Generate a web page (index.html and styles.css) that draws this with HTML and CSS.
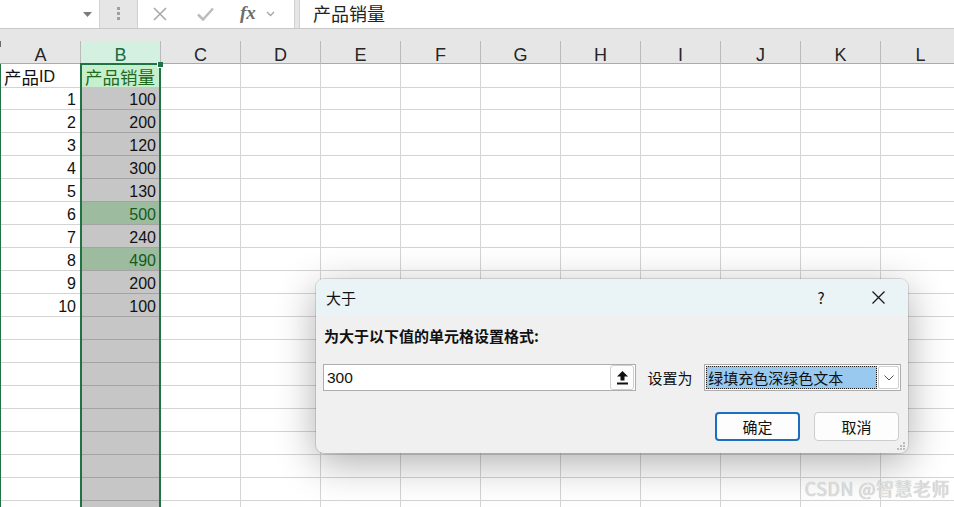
FILE: index.html
```html
<!DOCTYPE html>
<html lang="zh-CN">
<head>
<meta charset="utf-8">
<title>大于</title>
<link rel="stylesheet" href="styles.css">
</head>
<body>
<div class="app">
  <div class="fbar">
    <div class="namebox">
      <svg class="caret" width="9" height="5" viewBox="0 0 9 5"><path d="M0 0H9L4.5 5Z" fill="#7a7a7a"/></svg>
    </div>
    <div class="dots"><i></i><i></i><i></i></div>
    <div class="fxtools">
      <svg class="ico-x" width="16" height="14" viewBox="0 0 16 14"><path d="M2 1L14 13M14 1L2 13" stroke="#a9a9a9" stroke-width="1.6" fill="none"/></svg>
      <svg class="ico-ok" width="17" height="14" viewBox="0 0 17 14"><path d="M1 7.5L6 12.5L16 1.5" stroke="#bdbdbd" stroke-width="2.6" fill="none"/></svg>
      <span class="fx">fx</span>
      <svg class="ico-dd" width="9" height="6" viewBox="0 0 9 6"><path d="M1 1L4.5 4.5L8 1" stroke="#a3a3a3" stroke-width="1.3" fill="none"/></svg>
    </div>
    <div class="formula">产品销量</div>
  </div>
  <div class="band"></div>
  <div class="sheet">
    <div class="hdr">
      <div class="corner"></div>
      <div class="h">A</div><div class="h hsel">B</div><div class="h">C</div><div class="h">D</div><div class="h">E</div><div class="h">F</div><div class="h">G</div><div class="h">H</div><div class="h">I</div><div class="h">J</div><div class="h">K</div><div class="h">L</div>
    </div>
    <div class="rows">
      <div class="row"><div class="edge"></div><div class="c a left"><span class="cjk">产品</span>ID</div><div class="c b active"><span class="cjk">产品销量</span></div><div class="rest"></div></div>
      <div class="row"><div class="edge"></div><div class="c a">1</div><div class="c b">100</div><div class="rest"></div></div>
      <div class="row"><div class="edge"></div><div class="c a">2</div><div class="c b">200</div><div class="rest"></div></div>
      <div class="row"><div class="edge"></div><div class="c a">3</div><div class="c b">120</div><div class="rest"></div></div>
      <div class="row"><div class="edge"></div><div class="c a">4</div><div class="c b">300</div><div class="rest"></div></div>
      <div class="row"><div class="edge"></div><div class="c a">5</div><div class="c b">130</div><div class="rest"></div></div>
      <div class="row"><div class="edge"></div><div class="c a">6</div><div class="c b hit">500</div><div class="rest"></div></div>
      <div class="row"><div class="edge"></div><div class="c a">7</div><div class="c b">240</div><div class="rest"></div></div>
      <div class="row"><div class="edge"></div><div class="c a">8</div><div class="c b hit">490</div><div class="rest"></div></div>
      <div class="row"><div class="edge"></div><div class="c a">9</div><div class="c b">200</div><div class="rest"></div></div>
      <div class="row"><div class="edge"></div><div class="c a">10</div><div class="c b">100</div><div class="rest"></div></div>
      <div class="row"><div class="edge"></div><div class="c a"></div><div class="c b"></div><div class="rest"></div></div>
      <div class="row"><div class="edge"></div><div class="c a"></div><div class="c b"></div><div class="rest"></div></div>
      <div class="row"><div class="edge"></div><div class="c a"></div><div class="c b"></div><div class="rest"></div></div>
      <div class="row"><div class="edge"></div><div class="c a"></div><div class="c b"></div><div class="rest"></div></div>
      <div class="row"><div class="edge"></div><div class="c a"></div><div class="c b"></div><div class="rest"></div></div>
      <div class="row"><div class="edge"></div><div class="c a"></div><div class="c b"></div><div class="rest"></div></div>
      <div class="row"><div class="edge"></div><div class="c a"></div><div class="c b"></div><div class="rest"></div></div>
      <div class="row"><div class="edge"></div><div class="c a"></div><div class="c b"></div><div class="rest"></div></div>
      <div class="row"><div class="edge"></div><div class="c a"></div><div class="c b"></div><div class="rest"></div></div>
    </div>
    <div class="selection"><span class="handle"></span></div>
  </div>

  <div class="dialog">
    <div class="dlg-title">
      <span class="dlg-name">大于</span>
      <span class="dlg-help">?</span>
      <span class="dlg-close">
        <svg width="13" height="13" viewBox="0 0 13 13"><path d="M0.5 0.5L12.5 12.5M12.5 0.5L0.5 12.5" stroke="#1a1a1a" stroke-width="1.3" fill="none"/></svg>
      </span>
    </div>
    <div class="dlg-body">
      <div class="dlg-label">为大于以下值的单元格设置格式:</div>
      <div class="dlg-inputs">
        <div class="valbox">
          <span class="valtext">300</span>
          <span class="refbtn">
            <svg width="11" height="14" viewBox="0 0 11 14"><path d="M5.5 0L11 5.5H7.5V9.5H3.5V5.5H0Z" fill="#111"/><rect x="0" y="11.5" width="11" height="2" fill="#111"/></svg>
          </span>
        </div>
        <span class="setas">设置为</span>
        <div class="combo">
          <span class="combo-val">绿填充色深绿色文本</span>
          <span class="combo-arrow">
            <svg width="10" height="6" viewBox="0 0 10 6"><path d="M0.5 0.5L5 5L9.5 0.5" stroke="#555" stroke-width="1" fill="none"/></svg>
          </span>
        </div>
      </div>
      <div class="dlg-buttons">
        <span class="btn btn-default">确定</span>
        <span class="btn">取消</span>
      </div>
    </div>
    <svg class="sizegrip" width="9" height="9" viewBox="0 0 9 9">
      <rect x="7" y="1" width="2" height="2" fill="#bcbcbc"/>
      <rect x="4" y="4" width="2" height="2" fill="#bcbcbc"/><rect x="7" y="4" width="2" height="2" fill="#bcbcbc"/>
      <rect x="1" y="7" width="2" height="2" fill="#bcbcbc"/><rect x="4" y="7" width="2" height="2" fill="#bcbcbc"/><rect x="7" y="7" width="2" height="2" fill="#bcbcbc"/>
    </svg>
  </div>

  <div class="watermark">CSDN @智慧老师</div>
</div>
</body>
</html>
```

FILE: styles.css
```css
* { box-sizing: border-box; }
html, body { margin: 0; padding: 0; }
body {
  font-family: "Liberation Sans", "Noto Sans CJK SC", sans-serif;
  background: #ffffff;
}
.app {
  position: relative;
  width: 954px;
  height: 507px;
  overflow: hidden;
  background: #e6e6e6;
  display: flex;
  flex-direction: column;
}

/* formula bar */
.fbar {
  height: 29px;
  flex: none;
  display: flex;
  border-bottom: 1px solid #c8c8c8;
  background: #e6e6e6;
}
.namebox {
  width: 100px;
  background: #ffffff;
  border-right: 1px solid #d2d2d2;
  display: flex;
  align-items: center;
  justify-content: flex-end;
  padding-right: 7px;
  padding-top: 1px;
}
.dots {
  width: 37px;
  display: flex;
  flex-direction: column;
  align-items: center;
  justify-content: center;
  gap: 2px;
  padding-bottom: 2px;
}
.dots i {
  display: block;
  width: 3px;
  height: 3px;
  background: #a0a0a0;
}
.fxtools {
  width: 158px;
  background: #ffffff;
  border-left: 1px solid #d0d0d0;
  border-right: 1px solid #d0d0d0;
  display: flex;
  align-items: center;
}
.ico-x { margin-left: 14px; }
.ico-ok { margin-left: 29px; }
.fx {
  margin-left: 26px;
  font-family: "Liberation Serif", "DejaVu Serif", serif;
  font-style: italic;
  font-weight: bold;
  font-size: 19px;
  color: #6d6d6d;
  line-height: 1;
  padding-bottom: 3px;
}
.ico-dd { margin-left: 10px; }
.formula {
  flex: 1;
  margin-left: 4px;
  background: #ffffff;
  border-left: 1px solid #d0d0d0;
  padding-left: 13px;
  font-family: "Noto Sans CJK SC", sans-serif;
  font-size: 18px;
  line-height: 27px;
  color: #222;
}
.band { height: 12px; flex: none; }

/* sheet */
.sheet {
  position: relative;
  flex: 1;
  background: #ffffff;
}
.hdr {
  height: 23px;
  display: grid;
  grid-template-columns: 1px repeat(12, 80px);
  background: #e6e6e6;
  border-bottom: 1px solid #ababab;
}
.corner { background: #6b6b6b; height: 6px; }
.h {
  border-right: 1px solid #bababa;
  text-align: center;
  font-size: 18px;
  line-height: 22px;
  padding-top: 3px;
  color: #262626;
}
.hsel {
  background: #d3f0e0;
  color: #1b6b45;
}
.rows { display: flex; flex-direction: column; }
.row {
  height: 23px;
  display: grid;
  grid-template-columns: 1px 80px 80px 1fr;
}
.edge { background: #217346; }
.c {
  border-bottom: 1px solid #d4d4d4;
  border-right: 1px solid #d4d4d4;
  font-size: 16px;
  display: flex;
  align-items: center;
  justify-content: flex-end;
  padding: 3px 4px 0 0;
  color: #111;
  white-space: nowrap;
}
.c.left { justify-content: flex-start; padding-left: 3px; padding-right: 0; }
.cjk {
  font-family: "Noto Sans CJK SC", sans-serif;
  font-size: 17.5px;
  line-height: 20px;
}
.b {
  background: #c6c6c6;
  border-bottom-color: #a3a3a3;
}
.b.active {
  background: #c6efce;
  color: #1f6a1f;
  justify-content: flex-start;
  padding-left: 4px;
  border-bottom-color: #d4d4d4;
}
.b.hit {
  background: #9dbb9f;
  color: #145c1a;
}
.rest {
  border-bottom: 1px solid #d4d4d4;
  background: repeating-linear-gradient(to right, transparent 0 79px, #d4d4d4 79px 80px);
}
.selection {
  position: absolute;
  left: 80px;
  top: 22px;
  width: 81px;
  height: 600px;
  border: 2px solid #217346;
}
.handle {
  position: absolute;
  right: -4px;
  top: -3px;
  width: 6px;
  height: 6px;
  background: #217346;
  border: 1px solid #ffffff;
  border-right: none;
  border-top: none;
}

/* dialog */
.dialog {
  position: absolute;
  left: 316px;
  top: 279px;
  width: 592px;
  height: 174px;
  border-radius: 8px;
  background: #f0f0f0;
  box-shadow: 0 0 0 1px rgba(0,0,0,0.12), 0 10px 40px rgba(0,0,0,0.32);
  overflow: hidden;
  display: flex;
  flex-direction: column;
  font-family: "Liberation Sans", "Noto Sans CJK SC", sans-serif;
  font-size: 15px;
  color: #111;
}
.dlg-title {
  height: 37px;
  flex: none;
  background: #eaf3f6;
  display: flex;
  align-items: center;
  padding-left: 10px;
}
.dlg-name { flex: 1; font-family: "Noto Sans CJK SC", sans-serif; }
.dlg-help {
  width: 46px;
  text-align: center;
  font-family: "Noto Sans CJK SC", sans-serif;
  font-size: 15px;
  margin-right: 4px;
}
.dlg-close {
  width: 60px;
  display: flex;
  justify-content: center;
  align-items: center;
}
.dlg-body {
  padding: 10px 7px 0 7px;
  display: flex;
  flex-direction: column;
}
.dlg-label {
  font-family: "Noto Sans CJK SC", sans-serif;
  font-weight: bold;
  line-height: 20px;
  padding-left: 1px;
}
.dlg-inputs {
  margin-top: 18px;
  display: flex;
  align-items: center;
}
.valbox {
  width: 314px;
  height: 27px;
  background: #ffffff;
  border: 1px solid #adadad;
  display: flex;
  align-items: center;
  padding: 0 1px 0 3px;
}
.valtext { flex: 1; font-size: 15.5px; }
.refbtn {
  width: 24px;
  height: 25px;
  border: 1px solid #cfcfcf;
  border-radius: 3px;
  background: #fdfdfd;
  display: flex;
  align-items: center;
  justify-content: center;
}
.setas {
  margin-left: 11px;
  font-family: "Noto Sans CJK SC", sans-serif;
  width: 57px;
}
.combo {
  width: 197px;
  height: 27px;
  border: 1px solid #adadad;
  background: #ffffff;
  display: flex;
  padding: 1px;
  gap: 1px;
}
.combo-val {
  flex: 1;
  background: #99c9ef;
  outline: 1px dotted #222;
  outline-offset: -1px;
  font-family: "Noto Sans CJK SC", sans-serif;
  line-height: 23px;
  padding-left: 2px;
  white-space: nowrap;
}
.combo-arrow {
  width: 21px;
  border: 1px solid #d0d0d0;
  border-radius: 2px;
  display: flex;
  align-items: center;
  justify-content: center;
}
.dlg-buttons {
  margin-top: 21px;
  display: flex;
  justify-content: flex-end;
  gap: 14px;
  padding-right: 2px;
}
.btn {
  width: 85px;
  height: 29px;
  border: 1px solid #cccccc;
  border-radius: 4px;
  background: #fdfdfd;
  text-align: center;
  line-height: 27px;
  font-family: "Noto Sans CJK SC", sans-serif;
}
.btn-default {
  border: 2px solid #1a6fc0;
  line-height: 25px;
}
.sizegrip {
  position: absolute;
  right: 3px;
  bottom: 3px;
}

.watermark {
  position: absolute;
  right: 4px;
  bottom: 6px;
  font-family: "Noto Sans CJK SC", sans-serif;
  font-size: 18px;
  letter-spacing: 0.5px;
  color: #dedede;
  text-shadow: 0 0 1px #a6a6a6;
}
```
